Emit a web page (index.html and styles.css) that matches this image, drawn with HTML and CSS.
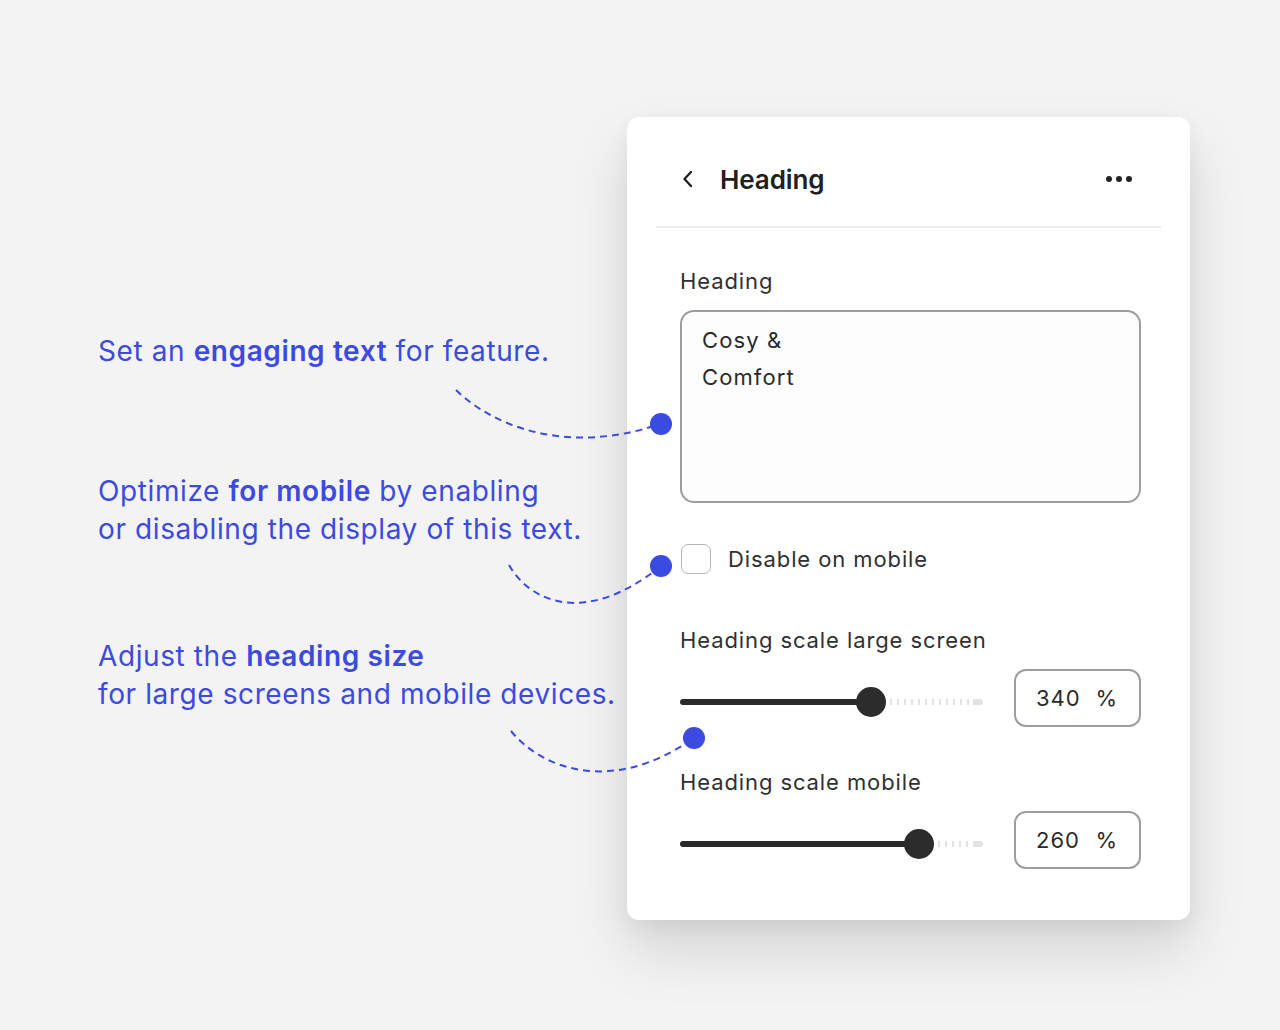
FILE: index.html
```html
<!DOCTYPE html>
<html>
<head>
<meta charset="utf-8">
<link rel="stylesheet" href="styles.css">
</head>
<body>
<main class="page">
  <section class="notes">
    <p class="note note-1">Set an <b>engaging text</b> for feature.</p>
    <p class="note note-2">Optimize <b>for mobile</b> by enabling<br>or disabling the display of this text.</p>
    <p class="note note-3">Adjust the <b>heading size</b><br>for large screens and mobile devices.</p>
  </section>
  <section class="panel">
    <header class="panel-head">
      <svg class="chev" width="12" height="18" viewBox="0 0 12 18"><path d="M9 2 L2.5 9 L9 16" fill="none" stroke="#222" stroke-width="2.4" stroke-linecap="round" stroke-linejoin="round"/></svg>
      <h1 class="title">Heading</h1>
      <span class="more"><i></i><i></i><i></i></span>
    </header>
    <div class="panel-body">
      <label class="label lbl-heading">Heading</label>
      <div class="textarea">Cosy &amp;<br>Comfort</div>
      <div class="check-row">
        <span class="checkbox"></span>
        <span class="check-label">Disable on mobile</span>
      </div>
      <label class="label lbl-scale">Heading scale large screen</label>
      <div class="range-row">
        <div class="slider">
          <div class="fill" style="width:63%"></div>
          <div class="rest"></div>
          <span class="thumb" style="left:63%"></span>
        </div>
        <div class="num"><span>340</span><span>%</span></div>
      </div>
      <label class="label lbl-scale2">Heading scale mobile</label>
      <div class="range-row">
        <div class="slider">
          <div class="fill" style="width:79%"></div>
          <div class="rest"></div>
          <span class="thumb" style="left:79%"></span>
        </div>
        <div class="num"><span>260</span><span>%</span></div>
      </div>
    </div>
  </section>
  <svg class="links" width="1280" height="1030" viewBox="0 0 1280 1030">
    <g fill="none" stroke="#3b4ae0" stroke-width="2" stroke-dasharray="7 5">
      <path d="M456 390 C 495 428 570 455 660 424"/>
      <path d="M509 565 C 530 602 585 627 661 566"/>
      <path d="M511 731 C 540 767 610 797 694 738"/>
    </g>
    <g fill="#3b4ae0">
      <circle cx="661" cy="424" r="11"/>
      <circle cx="661" cy="566" r="11"/>
      <circle cx="694" cy="738" r="11"/>
    </g>
  </svg>
</main>
</body>
</html>
```
FILE: styles.css
```css
* { box-sizing: border-box; }
html, body { margin: 0; padding: 0; }
body {
  background: #f3f3f3;
  font-family: Inter, "Noto Sans", sans-serif;
  width: 1280px;
  height: 1030px;
  overflow: hidden;
}
.page {
  position: relative;
  display: flex;
  padding: 117px 0 0 98px;
  height: 1030px;
}
.notes {
  width: 529px;
  padding-top: 215px;
  display: flex;
  flex-direction: column;
}
.note {
  margin: 0;
  color: #3b4ae0;
  font-size: 28px;
  line-height: 38px;
  font-weight: 400;
  letter-spacing: 0.6px;
  white-space: nowrap;
}
.note b { font-weight: 600; }
.note-2 { margin-top: 102px; }
.note-3 { margin-top: 89px; }

.panel {
  width: 563px;
  height: 803px;
  background: #fff;
  border-radius: 12px;
  box-shadow: 0 30px 60px rgba(0,0,0,0.13), 0 8px 20px rgba(0,0,0,0.05);
}
.panel-head {
  margin: 0 29px;
  height: 111px;
  border-bottom: 2px solid #eeeeee;
  display: flex;
  align-items: center;
  padding: 16px 29px 0 26px;
}
.chev { display: block; margin-top: -1px; }
.title {
  margin: 0 0 0 26px;
  font-size: 26px;
  font-weight: 600;
  color: #202020;
  letter-spacing: -0.1px;
  flex: 1;
}
.more { display: flex; gap: 4px; margin-top: -2px; }
.more i { width: 6px; height: 6px; border-radius: 50%; background: #222; display: block; }

.panel-body {
  padding: 38px 49px 0 53px;
  display: flex;
  flex-direction: column;
}
.label {
  display: block;
  font-size: 22px;
  line-height: 30px;
  color: #303030;
  letter-spacing: 0.9px;
}
.textarea {
  margin-top: 14px;
  height: 193px;
  border: 2px solid #9d9d9d;
  border-radius: 14px;
  background: #fdfdfd;
  padding: 10px 20px;
  font-size: 22px;
  line-height: 37px;
  color: #2a2a2a;
  letter-spacing: 1.1px;
}
.check-row {
  margin-top: 41px;
  display: flex;
  align-items: center;
  height: 30px;
}
.checkbox {
  width: 30px;
  height: 30px;
  border: 1.5px solid #b5b5b5;
  border-radius: 7px;
  margin-left: 1px;
}
.check-label {
  margin-left: 17px;
  font-size: 22px;
  color: #303030;
  letter-spacing: 0.9px;
}
.lbl-scale { margin-top: 51px; }
.lbl-scale2 { margin-top: 40px; }
.range-row {
  margin-top: 14px;
  display: flex;
  align-items: center;
  gap: 31px;
}
.slider {
  position: relative;
  width: 303px;
  height: 8px;
  margin-top: 7px;
  display: flex;
  align-items: center;
}
.fill {
  height: 6px;
  background: #2a2a2a;
  border-radius: 3px;
}
.rest {
  flex: 1;
  height: 6px;
  background:
    linear-gradient(#e2e2e2, #e2e2e2) right center / 10px 6px no-repeat,
    repeating-linear-gradient(90deg, transparent 0 5px, #e2e2e2 5px 7px) left center / calc(100% - 10px) 6px no-repeat;
  border-radius: 0 3px 3px 0;
}
.thumb {
  position: absolute;
  top: 50%;
  width: 30px;
  height: 30px;
  margin: -15px 0 0 -15px;
  border-radius: 50%;
  background: #2c2c2c;
}
.num {
  width: 127px;
  height: 58px;
  border: 2px solid #9d9d9d;
  border-radius: 12px;
  display: flex;
  align-items: center;
  justify-content: space-between;
  padding: 0 21px 0 20px;
  font-size: 22px;
  color: #2a2a2a;
  letter-spacing: 1px;
}
.links {
  position: absolute;
  left: 0;
  top: 0;
  pointer-events: none;
}
```
